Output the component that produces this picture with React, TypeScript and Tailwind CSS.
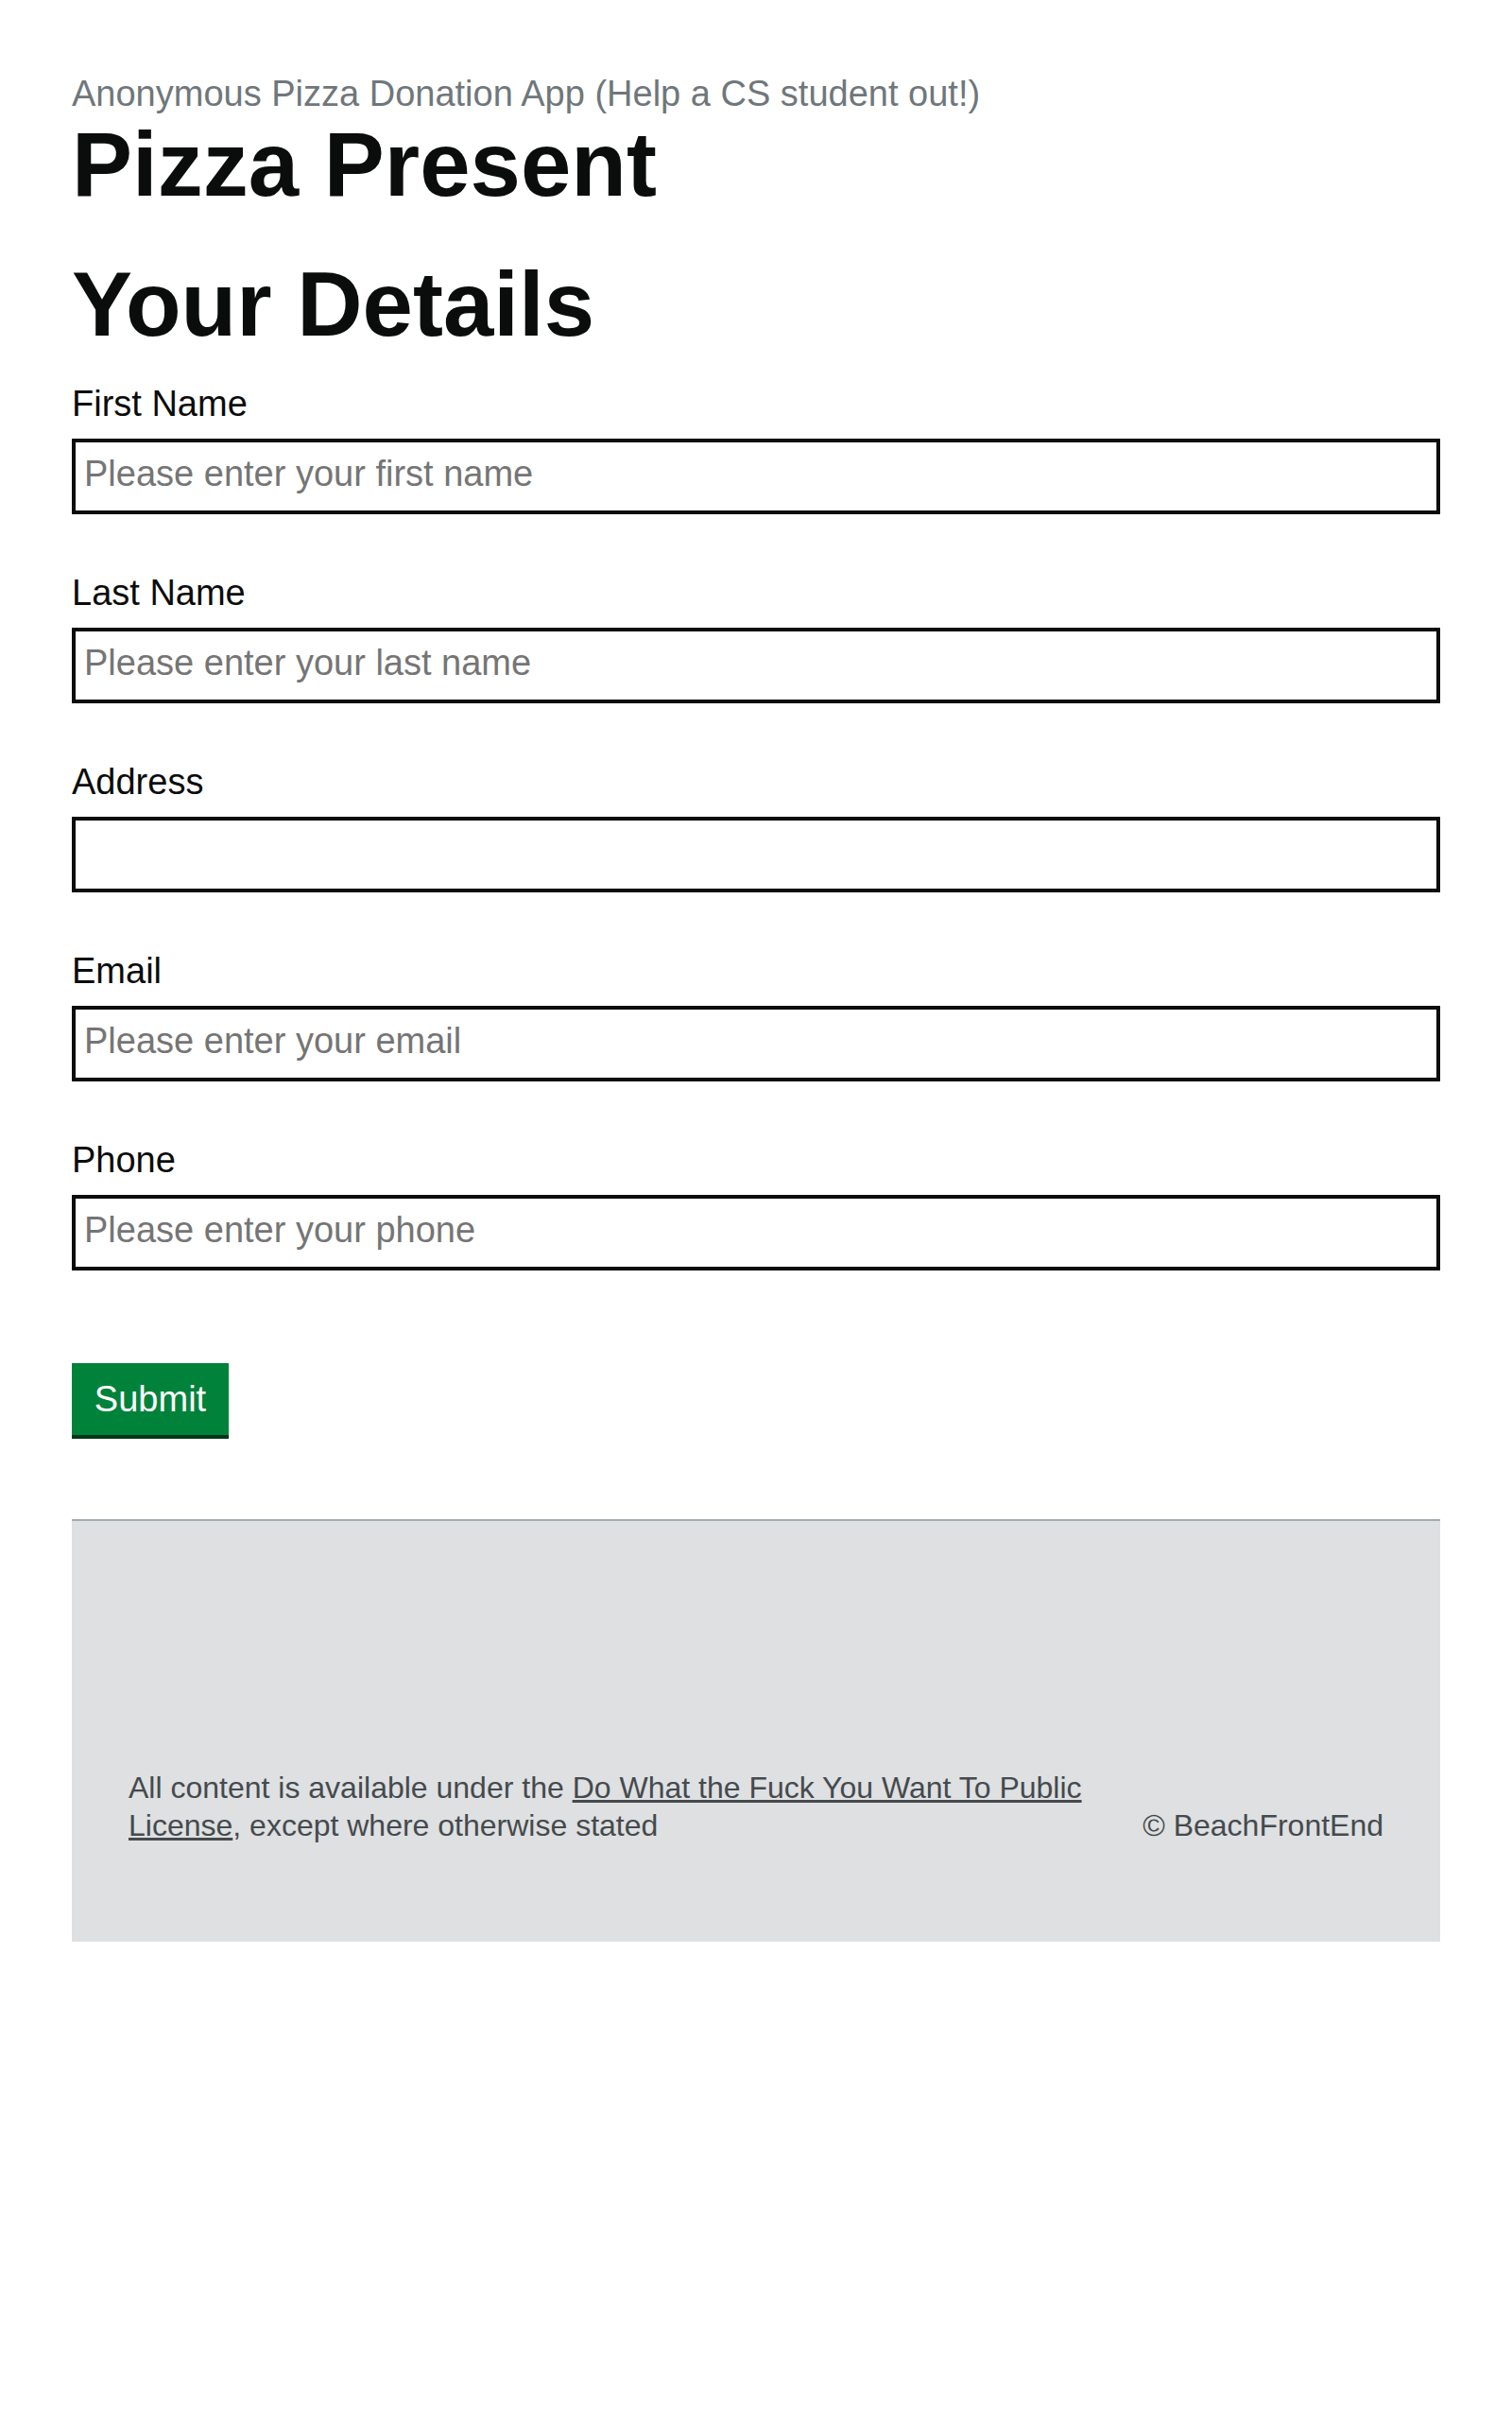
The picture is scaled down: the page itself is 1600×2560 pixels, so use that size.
import React from "react";

const fields = [
  { label: "First Name", placeholder: "Please enter your first name", type: "text" },
  { label: "Last Name", placeholder: "Please enter your last name", type: "text" },
  { label: "Address", placeholder: "", type: "text" },
  { label: "Email", placeholder: "Please enter your email", type: "email" },
  { label: "Phone", placeholder: "Please enter your phone", type: "tel" },
];

export default function App() {
  return (
    <div className="min-h-screen bg-white font-['Liberation_Sans',Arial,sans-serif] text-[#0b0c0c]">
      <div className="px-[76px] pt-[74px]">
        <main>
          <span className="block text-[38px] leading-[50px] text-[#6f777b]">
            Anonymous Pizza Donation App (Help a CS student out!)
          </span>
          <h1 className="text-[96px] leading-[100px] font-bold">Pizza Present</h1>
          <h1 className="mt-[48px] text-[96px] leading-[100px] font-bold">Your Details</h1>
          <form className="mt-[30px] flex flex-col gap-[58px]" onSubmit={(e) => e.preventDefault()}>
            {fields.map((f) => (
              <div key={f.label} className="flex flex-col">
                <label className="mb-[12px] block text-[38px] leading-[50px] text-[#0b0c0c]">
                  {f.label}
                </label>
                <input
                  type={f.type}
                  placeholder={f.placeholder}
                  className="h-[80px] w-full border-4 border-[#0b0c0c] bg-white px-[9px] pt-0 pb-[5px] text-[38px] text-[#0b0c0c] outline-none placeholder:text-[#757575]"
                />
              </div>
            ))}
          </form>
          <button
            type="button"
            className="mt-[98px] flex h-[76px] w-[166px] items-center justify-center bg-[#00823b] text-[38px] leading-none text-white shadow-[0_4px_0_#003618]"
          >
            Submit
          </button>
        </main>
        <footer className="mt-[89px] border-t-2 border-[#a1acb2] bg-[#dee0e2] px-[60px] pt-[262px] pb-[103px] text-[32px] leading-[40px] text-[#454a4d]">
          <div className="flex items-end justify-between">
            <div className="w-[1020px]">
              All content is available under the{" "}
              <a href="#" className="text-[#454a4d] underline">
                Do What the Fuck You Want To Public License
              </a>
              , except where otherwise stated
            </div>
            <div className="shrink-0">© BeachFrontEnd</div>
          </div>
        </footer>
      </div>
    </div>
  );
}
